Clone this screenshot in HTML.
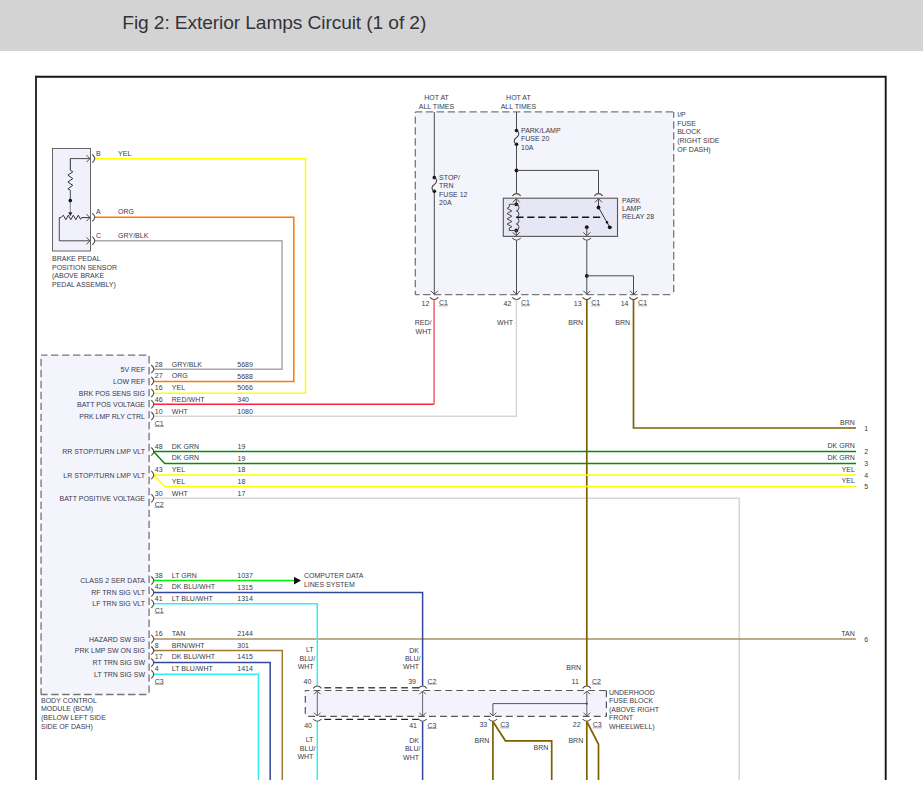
<!DOCTYPE html>
<html><head><meta charset="utf-8"><style>
html,body{margin:0;padding:0;background:#fff;width:923px;height:809px;overflow:hidden}
.hdr{position:absolute;left:0;top:0;width:923px;height:51px;background:#d3d3d3}
svg{position:absolute;left:0;top:0}
text{font-family:"Liberation Sans",sans-serif}
</style></head><body>
<div class="hdr"></div>
<svg width="923" height="809" viewBox="0 0 923 809">
<text x="122.3" y="28.9" font-size="19.2" fill="#33333a" textLength="304" lengthAdjust="spacing">Fig 2: Exterior Lamps Circuit (1 of 2)</text>
<polyline points="35.05,76.7 885.7,76.7 885.7,780" fill="none" stroke="#151515" stroke-width="1.9" stroke-linejoin="miter"/>
<polyline points="36,780 36,75.75" fill="none" stroke="#262626" stroke-width="1.9" stroke-linejoin="miter"/>
<polyline points="153.5,498.2 739.2,498.2 739.2,780" fill="none" stroke="#d6d6d6" stroke-width="1.5" stroke-linejoin="miter"/>
<polyline points="153.5,639.0 856,639.0" fill="none" stroke="#a89060" stroke-width="1.5" stroke-linejoin="miter"/>
<rect x="52.5" y="148.5" width="38" height="102.5" fill="#f1f1fb" stroke="#666" stroke-width="1"/>
<polyline points="94.6,158.7 305.5,158.7 305.5,393.2 153.6,393.2" fill="none" stroke="#ffff00" stroke-width="1.5" stroke-linejoin="miter"/>
<polyline points="94.6,217.2 293.8,217.2 293.8,381.4 153.6,381.4" fill="none" stroke="#ff7a00" stroke-width="1.5" stroke-linejoin="miter"/>
<polyline points="94.6,240.8 282,240.8 282,369.3 153.6,369.3" fill="none" stroke="#a8a8a8" stroke-width="1.5" stroke-linejoin="miter"/>
<path d="M92.3,154.5 Q95.19999999999999,157.29999999999998 94.6,158.6 Q95.19999999999999,159.9 92.3,162.7" fill="none" stroke="#505050" stroke-width="1.1"/>
<path d="M92.3,213.1 Q95.19999999999999,215.89999999999998 94.6,217.2 Q95.19999999999999,218.5 92.3,221.29999999999998" fill="none" stroke="#505050" stroke-width="1.1"/>
<path d="M92.3,236.70000000000002 Q95.19999999999999,239.5 94.6,240.8 Q95.19999999999999,242.10000000000002 92.3,244.9" fill="none" stroke="#505050" stroke-width="1.1"/>
<polyline points="70.3,158.6 90,158.6" fill="none" stroke="#4a4a4a" stroke-width="1" stroke-linejoin="miter"/>
<polyline points="86.5,155.1 90,158.6 86.5,162.1" fill="none" stroke="#4a4a4a" stroke-width="1"/>
<polyline points="70.3,200 70.3,190.2" fill="none" stroke="#4a4a4a" stroke-width="1" stroke-linejoin="miter"/>
<polyline points="70.3,158.6 70.3,170.2 72.8,171.8 67.9,175.2 72.8,178.6 67.9,182 72.8,185.4 67.9,188.8 70.3,190.2" fill="none" stroke="#333" stroke-width="1" stroke-linejoin="miter"/>
<line x1="70.3" y1="200" x2="70.3" y2="212.5" stroke="#888" stroke-width="1"/>
<circle cx="70.3" cy="200.6" r="1.8" fill="#111"/>
<polygon points="68.3,212.3 72.3,212.3 70.3,216.3" fill="#222"/>
<polyline points="59.3,217.6 61,217.6 63.3,215.2 65.8,219.7 68.3,215.2 70.8,219.7 73.3,215.2 75.8,219.7 78.3,215.2 80.6,219.3 81.6,217.6 90,217.6" fill="none" stroke="#333" stroke-width="1" stroke-linejoin="miter"/>
<polyline points="86.5,214.1 90,217.6 86.5,221.1" fill="none" stroke="#4a4a4a" stroke-width="1"/>
<polyline points="59.3,217.6 59.3,240.8 90,240.8" fill="none" stroke="#4a4a4a" stroke-width="1" stroke-linejoin="miter"/>
<polyline points="86.5,237.3 90,240.8 86.5,244.3" fill="none" stroke="#4a4a4a" stroke-width="1"/>
<text x="96" y="155.7" font-size="7" fill="#3a3a4a">B</text>
<text x="118.1" y="155.7" font-size="7" fill="#3a3a4a">YEL</text>
<text x="96" y="213.9" font-size="7" fill="#3a3a4a">A</text>
<text x="118.1" y="213.9" font-size="7" fill="#3a3a4a">ORG</text>
<text x="96" y="238.1" font-size="7" fill="#3a3a4a">C</text>
<text x="118.1" y="238.1" font-size="7" fill="#3a3a4a">GRY/BLK</text>
<text x="52" y="261.0" font-size="7" fill="#3a3a4a">BRAKE PEDAL</text>
<text x="52" y="269.55" font-size="7" fill="#3a3a4a">POSITION SENSOR</text>
<text x="52" y="278.1" font-size="7" fill="#3a3a4a">(ABOVE BRAKE</text>
<text x="52" y="286.65" font-size="7" fill="#3a3a4a">PEDAL ASSEMBLY)</text>
<rect x="415.3" y="111.9" width="258.4" height="182.8" fill="#f4f4fd"/>
<line x1="415.3" y1="111.9" x2="673.7" y2="111.9" stroke="#787878" stroke-width="1.3" stroke-dasharray="7.4,3.5" stroke-dashoffset="0.4"/>
<line x1="415.3" y1="111.9" x2="415.3" y2="294.7" stroke="#787878" stroke-width="1.3" stroke-dasharray="7.4,3.5" stroke-dashoffset="6.4"/>
<line x1="673.7" y1="111.9" x2="673.7" y2="294.7" stroke="#787878" stroke-width="1.3" stroke-dasharray="7.4,3.5" stroke-dashoffset="1.5"/>
<line x1="415.3" y1="294.7" x2="673.7" y2="294.7" stroke="#787878" stroke-width="1.3" stroke-dasharray="7.4,3.5" stroke-dashoffset="3.2"/>
<text x="436.5" y="100.1" text-anchor="middle" font-size="7" fill="#3a3a4a">HOT AT</text>
<text x="436.5" y="108.9" text-anchor="middle" font-size="7" fill="#3a3a4a">ALL TIMES</text>
<text x="518.4" y="100.1" text-anchor="middle" font-size="7" fill="#3a3a4a">HOT AT</text>
<text x="518.4" y="108.9" text-anchor="middle" font-size="7" fill="#3a3a4a">ALL TIMES</text>
<text x="677.2" y="116.9" font-size="7" fill="#3a3a4a">I/P</text>
<text x="677.2" y="125.6" font-size="7" fill="#3a3a4a">FUSE</text>
<text x="677.2" y="134.3" font-size="7" fill="#3a3a4a">BLOCK</text>
<text x="677.2" y="143.0" font-size="7" fill="#3a3a4a">(RIGHT SIDE</text>
<text x="677.2" y="151.7" font-size="7" fill="#3a3a4a">OF DASH)</text>
<line x1="434.3" y1="112" x2="434.3" y2="177.5" stroke="#4a4a4a" stroke-width="1"/>
<line x1="434.3" y1="191.4" x2="434.3" y2="294" stroke="#4a4a4a" stroke-width="1"/>
<circle cx="434.3" cy="177.6" r="1.8" fill="#111"/>
<circle cx="434.3" cy="191.3" r="1.8" fill="#111"/>
<path d="M434.3,177.6 C437.4,179 437.4,182.6 434.3,184.45 C431.2,186.3 431.2,189.9 434.3,191.3" fill="none" stroke="#444" stroke-width="1.1"/>
<text x="439.1" y="179.8" font-size="7" fill="#3a3a4a">STOP/</text>
<text x="439.1" y="188.15" font-size="7" fill="#3a3a4a">TRN</text>
<text x="439.1" y="196.5" font-size="7" fill="#3a3a4a">FUSE 12</text>
<text x="439.1" y="204.85" font-size="7" fill="#3a3a4a">20A</text>
<polyline points="430.8,290.8 434.3,294.3 437.8,290.8" fill="none" stroke="#4a4a4a" stroke-width="1"/>
<line x1="516.5" y1="112" x2="516.5" y2="130.5" stroke="#4a4a4a" stroke-width="1"/>
<line x1="516.5" y1="144.4" x2="516.5" y2="193.4" stroke="#4a4a4a" stroke-width="1"/>
<circle cx="516.5" cy="130.6" r="1.8" fill="#111"/>
<circle cx="516.5" cy="144.3" r="1.8" fill="#111"/>
<path d="M516.5,130.6 C519.6,132 519.6,135.6 516.5,137.45 C513.4,139.3 513.4,142.9 516.5,144.3" fill="none" stroke="#444" stroke-width="1.1"/>
<text x="521" y="133.0" font-size="7" fill="#3a3a4a">PARK/LAMP</text>
<text x="521" y="141.45" font-size="7" fill="#3a3a4a">FUSE 20</text>
<text x="521" y="149.9" font-size="7" fill="#3a3a4a">10A</text>
<circle cx="516.5" cy="170.4" r="1.9" fill="#111"/>
<polyline points="516.5,170.4 598.5,170.4 598.5,193.4" fill="none" stroke="#4a4a4a" stroke-width="1" stroke-linejoin="miter"/>
<path d="M512.3,195.9 Q516.5,191.29999999999998 520.7,195.9" fill="none" stroke="#4a4a4a" stroke-width="1.1"/>
<path d="M594.3,195.9 Q598.5,191.29999999999998 602.7,195.9" fill="none" stroke="#4a4a4a" stroke-width="1.1"/>
<rect x="503.3" y="198.2" width="114.2" height="38.2" fill="#e6e6f5" stroke="#555" stroke-width="1.1"/>
<text x="622" y="202.6" font-size="7" fill="#3a3a4a">PARK</text>
<text x="622" y="210.9" font-size="7" fill="#3a3a4a">LAMP</text>
<text x="622" y="219.2" font-size="7" fill="#3a3a4a">RELAY 28</text>
<polyline points="512.8,202.3 516.3,198.8 519.8,202.3" fill="none" stroke="#4a4a4a" stroke-width="1"/>
<line x1="516.3" y1="198.8" x2="516.3" y2="204.2" stroke="#4a4a4a" stroke-width="1"/>
<circle cx="516.3" cy="204.3" r="1.9" fill="#111"/>
<circle cx="516.3" cy="230.5" r="1.9" fill="#111"/>
<polyline points="516.3,204.3 509.3,204.3 509.3,207" fill="none" stroke="#4a4a4a" stroke-width="1" stroke-linejoin="miter"/>
<polyline points="509.3,207 507,208.3125 511.9,210.9375 507,213.5625 511.9,216.1875 507,218.8125 511.9,221.4375 507,224.0625 511.9,226.6875 509.3,228 509.3,230.5 516.3,230.5" fill="none" stroke="#4a4a4a" stroke-width="1" stroke-linejoin="miter"/>
<path d="M516.3,204.3 a3,3.3 0 0 1 0,6.55 a3,3.3 0 0 1 0,6.55 a3,3.3 0 0 1 0,6.55 a3,3.3 0 0 1 0,6.55" fill="none" stroke="#444" stroke-width="1"/>
<line x1="516.3" y1="217.3" x2="601" y2="217.3" stroke="#151515" stroke-width="1.4" stroke-dasharray="7.2,3.75" stroke-dashoffset="0.0"/>
<polyline points="512.8,232.3 516.3,235.8 519.8,232.3" fill="none" stroke="#4a4a4a" stroke-width="1"/>
<line x1="516.3" y1="230.5" x2="516.3" y2="235.8" stroke="#4a4a4a" stroke-width="1"/>
<polyline points="595.0,202.3 598.5,198.8 602.0,202.3" fill="none" stroke="#4a4a4a" stroke-width="1"/>
<line x1="598.5" y1="198.8" x2="598.5" y2="207.5" stroke="#4a4a4a" stroke-width="1"/>
<circle cx="598.5" cy="207.5" r="1.9" fill="#111"/>
<line x1="598.5" y1="207.5" x2="609.8" y2="227.3" stroke="#333" stroke-width="1"/>
<circle cx="607" cy="222.2" r="1.2" fill="#111"/>
<circle cx="609.8" cy="227.3" r="1.9" fill="#111"/>
<circle cx="586.8" cy="227.2" r="1.9" fill="#111"/>
<line x1="586.8" y1="227.2" x2="586.8" y2="235.8" stroke="#4a4a4a" stroke-width="1"/>
<polyline points="583.3,232.3 586.8,235.8 590.3,232.3" fill="none" stroke="#4a4a4a" stroke-width="1"/>
<path d="M512.3,238.0 Q516.5,242.60000000000002 520.7,238.0" fill="none" stroke="#4a4a4a" stroke-width="1.1"/>
<path d="M582.5999999999999,238.0 Q586.8,242.60000000000002 591.0,238.0" fill="none" stroke="#4a4a4a" stroke-width="1.1"/>
<line x1="516.5" y1="240.5" x2="516.5" y2="294.3" stroke="#4a4a4a" stroke-width="1"/>
<polyline points="513.0,290.8 516.5,294.3 520.0,290.8" fill="none" stroke="#4a4a4a" stroke-width="1"/>
<line x1="586.8" y1="240.5" x2="586.8" y2="294.3" stroke="#4a4a4a" stroke-width="1"/>
<polyline points="583.3,290.8 586.8,294.3 590.3,290.8" fill="none" stroke="#4a4a4a" stroke-width="1"/>
<circle cx="586.8" cy="275.8" r="1.9" fill="#111"/>
<polyline points="586.8,275.8 633.5,275.8 633.5,294.3" fill="none" stroke="#4a4a4a" stroke-width="1" stroke-linejoin="miter"/>
<polyline points="630.0,290.8 633.5,294.3 637.0,290.8" fill="none" stroke="#4a4a4a" stroke-width="1"/>
<path d="M430.0,297.3 Q434.2,301.90000000000003 438.4,297.3" fill="none" stroke="#4a4a4a" stroke-width="1.1"/>
<path d="M512.1999999999999,297.3 Q516.4,301.90000000000003 520.6,297.3" fill="none" stroke="#4a4a4a" stroke-width="1.1"/>
<path d="M582.5,297.3 Q586.7,301.90000000000003 590.9000000000001,297.3" fill="none" stroke="#4a4a4a" stroke-width="1.1"/>
<path d="M629.3,297.3 Q633.5,301.90000000000003 637.7,297.3" fill="none" stroke="#4a4a4a" stroke-width="1.1"/>
<polyline points="434.1,404.3 153.6,404.3" fill="none" stroke="#ff2040" stroke-width="1.5" stroke-linejoin="miter"/>
<polyline points="434.1,299.5 434.1,404.3" fill="none" stroke="#f5707c" stroke-width="1.7" stroke-linejoin="miter"/>
<polyline points="516.4,299.5 516.4,416.2 153.6,416.2" fill="none" stroke="#d6d6d6" stroke-width="1.5" stroke-linejoin="miter"/>
<polyline points="586.8,299.5 586.8,685.8" fill="none" stroke="#7f6000" stroke-width="1.7" stroke-linejoin="miter"/>
<polyline points="633.5,299.5 633.5,428 856,428" fill="none" stroke="#7f6000" stroke-width="1.7" stroke-linejoin="miter"/>
<text x="429.3" y="305.9" text-anchor="end" font-size="7" fill="#3a3a4a">12</text>
<text x="438.90000000000003" y="305.3" font-size="7" fill="#3a3a4a">C1</text>
<line x1="438.90000000000003" y1="305.8" x2="447.90000000000003" y2="305.8" stroke="#8a8a8a" stroke-width="0.75"/>
<text x="511.4" y="305.9" text-anchor="end" font-size="7" fill="#3a3a4a">42</text>
<text x="521.0" y="305.3" font-size="7" fill="#3a3a4a">C1</text>
<line x1="521.0" y1="305.8" x2="530.0" y2="305.8" stroke="#8a8a8a" stroke-width="0.75"/>
<text x="581.6" y="305.9" text-anchor="end" font-size="7" fill="#3a3a4a">13</text>
<text x="591.2" y="305.3" font-size="7" fill="#3a3a4a">C1</text>
<line x1="591.2" y1="305.8" x2="600.2" y2="305.8" stroke="#8a8a8a" stroke-width="0.75"/>
<text x="628.5" y="305.9" text-anchor="end" font-size="7" fill="#3a3a4a">14</text>
<text x="638.1" y="305.3" font-size="7" fill="#3a3a4a">C1</text>
<line x1="638.1" y1="305.8" x2="647.1" y2="305.8" stroke="#8a8a8a" stroke-width="0.75"/>
<text x="431.5" y="325.0" text-anchor="end" font-size="7" fill="#3a3a4a">RED/</text>
<text x="431.5" y="333.7" text-anchor="end" font-size="7" fill="#3a3a4a">WHT</text>
<text x="513" y="325" text-anchor="end" font-size="7" fill="#3a3a4a">WHT</text>
<text x="583" y="324.8" text-anchor="end" font-size="7" fill="#3a3a4a">BRN</text>
<text x="630" y="324.8" text-anchor="end" font-size="7" fill="#3a3a4a">BRN</text>
<rect x="41.05" y="355.2" width="108.05" height="339.3" fill="#f4f4fd"/>
<line x1="41.05" y1="355.2" x2="149.1" y2="355.2" stroke="#747474" stroke-width="1.3" stroke-dasharray="7.4,3.58" stroke-dashoffset="1.03"/>
<line x1="41.05" y1="355.2" x2="41.05" y2="694.5" stroke="#747474" stroke-width="1.3" stroke-dasharray="7.4,3.58" stroke-dashoffset="7.38"/>
<line x1="149.1" y1="355.2" x2="149.1" y2="694.5" stroke="#747474" stroke-width="1.3" stroke-dasharray="7.4,3.58" stroke-dashoffset="10.18"/>
<line x1="41.05" y1="694.5" x2="149.1" y2="694.5" stroke="#747474" stroke-width="1.3" stroke-dasharray="7.4,3.58" stroke-dashoffset="0.83"/>
<text x="41" y="702.5" font-size="7" fill="#3a3a4a">BODY CONTROL</text>
<text x="41" y="711.2" font-size="7" fill="#3a3a4a">MODULE (BCM)</text>
<text x="41" y="719.9" font-size="7" fill="#3a3a4a">(BELOW LEFT SIDE</text>
<text x="41" y="728.6" font-size="7" fill="#3a3a4a">SIDE OF DASH)</text>
<path d="M151.29999999999998,365.0 Q154.2,367.8 153.6,369.1 Q154.2,370.40000000000003 151.29999999999998,373.20000000000005" fill="none" stroke="#505050" stroke-width="1.1"/>
<text x="145" y="371.70000000000005" text-anchor="end" font-size="7" fill="#3a3a4a">5V REF</text>
<text x="154.8" y="366.7" font-size="7" fill="#3a3a4a">28</text>
<text x="171.8" y="366.7" font-size="7" fill="#3a3a4a">GRY/BLK</text>
<text x="237.3" y="366.7" font-size="7" fill="#3a3a4a">5689</text>
<path d="M151.29999999999998,377.0 Q154.2,379.8 153.6,381.1 Q154.2,382.40000000000003 151.29999999999998,385.20000000000005" fill="none" stroke="#505050" stroke-width="1.1"/>
<text x="145" y="383.70000000000005" text-anchor="end" font-size="7" fill="#3a3a4a">LOW REF</text>
<text x="154.8" y="377.8" font-size="7" fill="#3a3a4a">27</text>
<text x="171.8" y="377.8" font-size="7" fill="#3a3a4a">ORG</text>
<text x="237.3" y="378.6" font-size="7" fill="#3a3a4a">5688</text>
<path d="M151.29999999999998,388.79999999999995 Q154.2,391.59999999999997 153.6,392.9 Q154.2,394.2 151.29999999999998,397.0" fill="none" stroke="#505050" stroke-width="1.1"/>
<text x="145" y="395.5" text-anchor="end" font-size="7" fill="#3a3a4a">BRK POS SENS SIG</text>
<text x="154.8" y="389.7" font-size="7" fill="#3a3a4a">16</text>
<text x="171.8" y="389.7" font-size="7" fill="#3a3a4a">YEL</text>
<text x="237.3" y="390.0" font-size="7" fill="#3a3a4a">5066</text>
<path d="M151.29999999999998,400.2 Q154.2,403.0 153.6,404.3 Q154.2,405.6 151.29999999999998,408.40000000000003" fill="none" stroke="#505050" stroke-width="1.1"/>
<text x="145" y="406.90000000000003" text-anchor="end" font-size="7" fill="#3a3a4a">BATT POS VOLTAGE</text>
<text x="154.8" y="401.7" font-size="7" fill="#3a3a4a">46</text>
<text x="171.8" y="401.7" font-size="7" fill="#3a3a4a">RED/WHT</text>
<text x="237.3" y="401.7" font-size="7" fill="#3a3a4a">340</text>
<path d="M151.29999999999998,412.0 Q154.2,414.8 153.6,416.1 Q154.2,417.40000000000003 151.29999999999998,420.20000000000005" fill="none" stroke="#505050" stroke-width="1.1"/>
<text x="145" y="418.70000000000005" text-anchor="end" font-size="7" fill="#3a3a4a">PRK LMP RLY CTRL</text>
<text x="154.8" y="413.6" font-size="7" fill="#3a3a4a">10</text>
<text x="171.8" y="413.6" font-size="7" fill="#3a3a4a">WHT</text>
<text x="237.3" y="413.6" font-size="7" fill="#3a3a4a">1080</text>
<text x="154.8" y="426" font-size="7" fill="#3a3a4a">C1</text>
<line x1="154.8" y1="426.5" x2="163.8" y2="426.5" stroke="#8a8a8a" stroke-width="0.75"/>
<polyline points="153.5,451.6 856,451.6" fill="none" stroke="#0a8a0a" stroke-width="1.5" stroke-linejoin="miter"/>
<polyline points="153.5,451.6 164.7,463.4 856,463.4" fill="none" stroke="#0a8a0a" stroke-width="1.5" stroke-linejoin="miter"/>
<polyline points="153.5,475 856,475" fill="none" stroke="#ffff00" stroke-width="1.5" stroke-linejoin="miter"/>
<polyline points="153.5,475 164.7,486.6 856,486.6" fill="none" stroke="#ffff00" stroke-width="1.5" stroke-linejoin="miter"/>
<path d="M151.29999999999998,447.5 Q154.2,450.3 153.6,451.6 Q154.2,452.90000000000003 151.29999999999998,455.70000000000005" fill="none" stroke="#505050" stroke-width="1.1"/>
<path d="M151.29999999999998,470.9 Q154.2,473.7 153.6,475 Q154.2,476.3 151.29999999999998,479.1" fill="none" stroke="#505050" stroke-width="1.1"/>
<path d="M151.29999999999998,494.09999999999997 Q154.2,496.9 153.6,498.2 Q154.2,499.5 151.29999999999998,502.3" fill="none" stroke="#505050" stroke-width="1.1"/>
<text x="145" y="454.2" text-anchor="end" font-size="7" fill="#3a3a4a">RR STOP/TURN LMP VLT</text>
<text x="145" y="477.6" text-anchor="end" font-size="7" fill="#3a3a4a">LR STOP/TURN LMP VLT</text>
<text x="145" y="500.8" text-anchor="end" font-size="7" fill="#3a3a4a">BATT POSITIVE VOLTAGE</text>
<text x="154.8" y="448.7" font-size="7" fill="#3a3a4a">48</text>
<text x="171.8" y="448.7" font-size="7" fill="#3a3a4a">DK GRN</text>
<text x="237.5" y="448.7" font-size="7" fill="#3a3a4a">19</text>
<text x="171.8" y="459.6" font-size="7" fill="#3a3a4a">DK GRN</text>
<text x="237.5" y="460.6" font-size="7" fill="#3a3a4a">19</text>
<text x="154.8" y="471.8" font-size="7" fill="#3a3a4a">43</text>
<text x="171.8" y="471.8" font-size="7" fill="#3a3a4a">YEL</text>
<text x="237.5" y="471.8" font-size="7" fill="#3a3a4a">18</text>
<text x="171.8" y="483.7" font-size="7" fill="#3a3a4a">YEL</text>
<text x="237.5" y="483.7" font-size="7" fill="#3a3a4a">18</text>
<text x="154.8" y="495.8" font-size="7" fill="#3a3a4a">30</text>
<text x="171.8" y="495.8" font-size="7" fill="#3a3a4a">WHT</text>
<text x="237.5" y="495.8" font-size="7" fill="#3a3a4a">17</text>
<text x="154.8" y="507" font-size="7" fill="#3a3a4a">C2</text>
<line x1="154.8" y1="507.5" x2="163.8" y2="507.5" stroke="#8a8a8a" stroke-width="0.75"/>
<text x="854.8" y="424.8" text-anchor="end" font-size="7" fill="#3a3a4a">BRN</text>
<text x="864.3" y="430.8" font-size="7" fill="#3a3a4a">1</text>
<text x="854.8" y="448.40000000000003" text-anchor="end" font-size="7" fill="#3a3a4a">DK GRN</text>
<text x="864.3" y="454.40000000000003" font-size="7" fill="#3a3a4a">2</text>
<text x="854.8" y="460.2" text-anchor="end" font-size="7" fill="#3a3a4a">DK GRN</text>
<text x="864.3" y="466.2" font-size="7" fill="#3a3a4a">3</text>
<text x="854.8" y="471.8" text-anchor="end" font-size="7" fill="#3a3a4a">YEL</text>
<text x="864.3" y="477.8" font-size="7" fill="#3a3a4a">4</text>
<text x="854.8" y="483.40000000000003" text-anchor="end" font-size="7" fill="#3a3a4a">YEL</text>
<text x="864.3" y="489.40000000000003" font-size="7" fill="#3a3a4a">5</text>
<text x="854.8" y="635.8" text-anchor="end" font-size="7" fill="#3a3a4a">TAN</text>
<text x="864.3" y="641.8" font-size="7" fill="#3a3a4a">6</text>
<polyline points="153.5,580.6 294,580.6" fill="none" stroke="#00f000" stroke-width="1.5" stroke-linejoin="miter"/>
<polygon points="294,576.7 301,580.6 294,584.5" fill="#111"/>
<text x="303.9" y="577.9" font-size="7" fill="#3a3a4a">COMPUTER DATA</text>
<text x="303.9" y="586.7" font-size="7" fill="#3a3a4a">LINES SYSTEM</text>
<polyline points="153.6,592.6 422.6,592.6 422.6,685.8" fill="none" stroke="#33489a" stroke-width="1.5" stroke-linejoin="miter"/>
<polyline points="422.6,721.5 422.6,780" fill="none" stroke="#33489a" stroke-width="1.5" stroke-linejoin="miter"/>
<polyline points="153.6,603.8 317.3,603.8 317.3,685.8" fill="none" stroke="#30f0f0" stroke-width="1.5" stroke-linejoin="miter"/>
<polyline points="317.3,721.5 317.3,780" fill="none" stroke="#30f0f0" stroke-width="1.5" stroke-linejoin="miter"/>
<path d="M151.29999999999998,576.5 Q154.2,579.3000000000001 153.6,580.6 Q154.2,581.9 151.29999999999998,584.7" fill="none" stroke="#505050" stroke-width="1.1"/>
<text x="145" y="583.2" text-anchor="end" font-size="7" fill="#3a3a4a">CLASS 2 SER DATA</text>
<text x="154.8" y="577.8" font-size="7" fill="#3a3a4a">38</text>
<text x="171.8" y="577.8" font-size="7" fill="#3a3a4a">LT GRN</text>
<text x="237.3" y="577.8" font-size="7" fill="#3a3a4a">1037</text>
<path d="M151.29999999999998,588.5 Q154.2,591.3000000000001 153.6,592.6 Q154.2,593.9 151.29999999999998,596.7" fill="none" stroke="#505050" stroke-width="1.1"/>
<text x="145" y="595.2" text-anchor="end" font-size="7" fill="#3a3a4a">RF TRN SIG VLT</text>
<text x="154.8" y="589.0" font-size="7" fill="#3a3a4a">42</text>
<text x="171.8" y="589.0" font-size="7" fill="#3a3a4a">DK BLU/WHT</text>
<text x="237.3" y="589.8" font-size="7" fill="#3a3a4a">1315</text>
<path d="M151.29999999999998,599.6999999999999 Q154.2,602.5 153.6,603.8 Q154.2,605.0999999999999 151.29999999999998,607.9" fill="none" stroke="#505050" stroke-width="1.1"/>
<text x="145" y="606.4" text-anchor="end" font-size="7" fill="#3a3a4a">LF TRN SIG VLT</text>
<text x="154.8" y="600.9" font-size="7" fill="#3a3a4a">41</text>
<text x="171.8" y="600.9" font-size="7" fill="#3a3a4a">LT BLU/WHT</text>
<text x="237.3" y="600.9" font-size="7" fill="#3a3a4a">1314</text>
<text x="154.8" y="612.8" font-size="7" fill="#3a3a4a">C1</text>
<line x1="154.8" y1="613.3" x2="163.8" y2="613.3" stroke="#8a8a8a" stroke-width="0.75"/>
<polyline points="153.5,650.6 282.3,650.6 282.3,780" fill="none" stroke="#a07a32" stroke-width="1.5" stroke-linejoin="miter"/>
<polyline points="153.5,662.6 270.2,662.6 270.2,780" fill="none" stroke="#33489a" stroke-width="1.5" stroke-linejoin="miter"/>
<polyline points="153.5,674.3 258.4,674.3 258.4,780" fill="none" stroke="#30f0f0" stroke-width="1.5" stroke-linejoin="miter"/>
<path d="M151.29999999999998,634.9 Q154.2,637.7 153.6,639.0 Q154.2,640.3 151.29999999999998,643.1" fill="none" stroke="#505050" stroke-width="1.1"/>
<text x="145" y="641.6" text-anchor="end" font-size="7" fill="#3a3a4a">HAZARD SW SIG</text>
<text x="154.8" y="635.8" font-size="7" fill="#3a3a4a">16</text>
<text x="171.8" y="635.8" font-size="7" fill="#3a3a4a">TAN</text>
<text x="237.3" y="635.8" font-size="7" fill="#3a3a4a">2144</text>
<path d="M151.29999999999998,646.5 Q154.2,649.3000000000001 153.6,650.6 Q154.2,651.9 151.29999999999998,654.7" fill="none" stroke="#505050" stroke-width="1.1"/>
<text x="145" y="653.2" text-anchor="end" font-size="7" fill="#3a3a4a">PRK LMP SW ON SIG</text>
<text x="154.8" y="647.5" font-size="7" fill="#3a3a4a">8</text>
<text x="171.8" y="647.5" font-size="7" fill="#3a3a4a">BRN/WHT</text>
<text x="237.3" y="647.5" font-size="7" fill="#3a3a4a">301</text>
<path d="M151.29999999999998,658.5 Q154.2,661.3000000000001 153.6,662.6 Q154.2,663.9 151.29999999999998,666.7" fill="none" stroke="#505050" stroke-width="1.1"/>
<text x="145" y="665.2" text-anchor="end" font-size="7" fill="#3a3a4a">RT TRN SIG SW</text>
<text x="154.8" y="659.4" font-size="7" fill="#3a3a4a">17</text>
<text x="171.8" y="659.4" font-size="7" fill="#3a3a4a">DK BLU/WHT</text>
<text x="237.3" y="659.4" font-size="7" fill="#3a3a4a">1415</text>
<path d="M151.29999999999998,670.1999999999999 Q154.2,673.0 153.6,674.3 Q154.2,675.5999999999999 151.29999999999998,678.4" fill="none" stroke="#505050" stroke-width="1.1"/>
<text x="145" y="676.9" text-anchor="end" font-size="7" fill="#3a3a4a">LT TRN SIG SW</text>
<text x="154.8" y="670.7" font-size="7" fill="#3a3a4a">4</text>
<text x="171.8" y="670.7" font-size="7" fill="#3a3a4a">LT BLU/WHT</text>
<text x="237.3" y="670.7" font-size="7" fill="#3a3a4a">1414</text>
<text x="154.8" y="683.8" font-size="7" fill="#3a3a4a">C3</text>
<line x1="154.8" y1="684.3" x2="163.8" y2="684.3" stroke="#8a8a8a" stroke-width="0.75"/>
<rect x="305.3" y="690.5" width="301.1" height="25.8" fill="#f3f3fc"/>
<line x1="305.3" y1="690.5" x2="606.4" y2="690.5" stroke="#555" stroke-width="1.2" stroke-dasharray="6.8,4.18" stroke-dashoffset="2.68"/>
<line x1="305.3" y1="690.5" x2="305.3" y2="716.3" stroke="#555" stroke-width="1.2" stroke-dasharray="6.8,4.18" stroke-dashoffset="5.48"/>
<line x1="606.4" y1="690.5" x2="606.4" y2="716.3" stroke="#555" stroke-width="1.2" stroke-dasharray="6.8,4.18" stroke-dashoffset="0.0"/>
<line x1="305.3" y1="716.3" x2="606.4" y2="716.3" stroke="#555" stroke-width="1.2" stroke-dasharray="6.8,4.18" stroke-dashoffset="7.98"/>
<line x1="324.3" y1="687.8" x2="420.3" y2="687.8" stroke="#4a4a4a" stroke-width="1.4" stroke-dasharray="6.8,4.18" stroke-dashoffset="0.0"/>
<line x1="324.3" y1="719.4" x2="420.3" y2="719.4" stroke="#222" stroke-width="1.4" stroke-dasharray="6.8,4.18" stroke-dashoffset="0.0"/>
<line x1="317.3" y1="691" x2="317.3" y2="716" stroke="#666" stroke-width="1"/>
<polyline points="314.0,694.3 317.3,691 320.6,694.3" fill="none" stroke="#555" stroke-width="1"/>
<polyline points="314.0,712.7 317.3,716 320.6,712.7" fill="none" stroke="#555" stroke-width="1"/>
<path d="M313.1,688.3 Q317.3,683.7 321.5,688.3" fill="none" stroke="#4a4a4a" stroke-width="1.1"/>
<path d="M313.1,719.0 Q317.3,723.5999999999999 321.5,719.0" fill="none" stroke="#4a4a4a" stroke-width="1.1"/>
<line x1="422.6" y1="691" x2="422.6" y2="716" stroke="#666" stroke-width="1"/>
<polyline points="419.3,694.3 422.6,691 425.90000000000003,694.3" fill="none" stroke="#555" stroke-width="1"/>
<polyline points="419.3,712.7 422.6,716 425.90000000000003,712.7" fill="none" stroke="#555" stroke-width="1"/>
<path d="M418.40000000000003,688.3 Q422.6,683.7 426.8,688.3" fill="none" stroke="#4a4a4a" stroke-width="1.1"/>
<path d="M418.40000000000003,719.0 Q422.6,723.5999999999999 426.8,719.0" fill="none" stroke="#4a4a4a" stroke-width="1.1"/>
<line x1="586.8" y1="691" x2="586.8" y2="716" stroke="#666" stroke-width="1"/>
<polyline points="583.5,694.3 586.8,691 590.0999999999999,694.3" fill="none" stroke="#555" stroke-width="1"/>
<polyline points="583.5,712.7 586.8,716 590.0999999999999,712.7" fill="none" stroke="#555" stroke-width="1"/>
<path d="M582.5999999999999,688.3 Q586.8,683.7 591.0,688.3" fill="none" stroke="#4a4a4a" stroke-width="1.1"/>
<path d="M582.5999999999999,719.0 Q586.8,723.5999999999999 591.0,719.0" fill="none" stroke="#4a4a4a" stroke-width="1.1"/>
<polyline points="586.8,703.6 492.9,703.6 492.9,716" fill="none" stroke="#555" stroke-width="1" stroke-linejoin="miter"/>
<circle cx="586.8" cy="703.6" r="1.1" fill="#444"/>
<polyline points="489.59999999999997,712.7 492.9,716 496.2,712.7" fill="none" stroke="#555" stroke-width="1"/>
<path d="M488.7,719.0 Q492.9,723.5999999999999 497.09999999999997,719.0" fill="none" stroke="#4a4a4a" stroke-width="1.1"/>
<text x="608.9" y="694.5" font-size="7" fill="#3a3a4a">UNDERHOOD</text>
<text x="608.9" y="703.0" font-size="7" fill="#3a3a4a">FUSE BLOCK</text>
<text x="608.9" y="711.5" font-size="7" fill="#3a3a4a">(ABOVE RIGHT</text>
<text x="608.9" y="720.0" font-size="7" fill="#3a3a4a">FRONT</text>
<text x="608.9" y="728.5" font-size="7" fill="#3a3a4a">WHEELWELL)</text>
<polyline points="492.9,721.5 492.9,780" fill="none" stroke="#7f6000" stroke-width="1.7" stroke-linejoin="miter"/>
<polyline points="492.9,721.5 505.4,740.8 551.7,740.8 551.7,780" fill="none" stroke="#7f6000" stroke-width="1.7" stroke-linejoin="miter"/>
<polyline points="586.8,721.5 586.8,780" fill="none" stroke="#7f6000" stroke-width="1.7" stroke-linejoin="miter"/>
<polyline points="586.8,721.5 598.5,744.3 598.5,780" fill="none" stroke="#7f6000" stroke-width="1.7" stroke-linejoin="miter"/>
<text x="313.6" y="652" text-anchor="end" font-size="7" fill="#3a3a4a">LT</text>
<text x="315.1" y="661.2" text-anchor="end" font-size="7" fill="#3a3a4a">BLU/</text>
<text x="313.6" y="669.3" text-anchor="end" font-size="7" fill="#3a3a4a">WHT</text>
<text x="419" y="652.6" text-anchor="end" font-size="7" fill="#3a3a4a">DK</text>
<text x="420.5" y="661.4" text-anchor="end" font-size="7" fill="#3a3a4a">BLU/</text>
<text x="419" y="669.3" text-anchor="end" font-size="7" fill="#3a3a4a">WHT</text>
<text x="313.4" y="742" text-anchor="end" font-size="7" fill="#3a3a4a">LT</text>
<text x="315.4" y="750.6" text-anchor="end" font-size="7" fill="#3a3a4a">BLU/</text>
<text x="313.4" y="759.2" text-anchor="end" font-size="7" fill="#3a3a4a">WHT</text>
<text x="419" y="743" text-anchor="end" font-size="7" fill="#3a3a4a">DK</text>
<text x="420.5" y="751.3" text-anchor="end" font-size="7" fill="#3a3a4a">BLU/</text>
<text x="419" y="759.5" text-anchor="end" font-size="7" fill="#3a3a4a">WHT</text>
<text x="311.3" y="683.6" text-anchor="end" font-size="7" fill="#3a3a4a">40</text>
<text x="416" y="683.6" text-anchor="end" font-size="7" fill="#3a3a4a">39</text>
<text x="427.5" y="683.6" font-size="7" fill="#3a3a4a">C2</text>
<line x1="427.5" y1="684.1" x2="436.5" y2="684.1" stroke="#8a8a8a" stroke-width="0.75"/>
<text x="312" y="728" text-anchor="end" font-size="7" fill="#3a3a4a">40</text>
<text x="417" y="728" text-anchor="end" font-size="7" fill="#3a3a4a">41</text>
<text x="427.5" y="728" font-size="7" fill="#3a3a4a">C3</text>
<line x1="427.5" y1="728.5" x2="436.5" y2="728.5" stroke="#8a8a8a" stroke-width="0.75"/>
<text x="581" y="669.5" text-anchor="end" font-size="7" fill="#3a3a4a">BRN</text>
<text x="578.9" y="683.7" text-anchor="end" font-size="7" fill="#3a3a4a">11</text>
<text x="591.9" y="683.7" font-size="7" fill="#3a3a4a">C2</text>
<line x1="591.9" y1="684.2" x2="600.9" y2="684.2" stroke="#8a8a8a" stroke-width="0.75"/>
<text x="487.2" y="727.3" text-anchor="end" font-size="7" fill="#3a3a4a">33</text>
<text x="500.2" y="727.3" font-size="7" fill="#3a3a4a">C3</text>
<line x1="500.2" y1="727.8" x2="509.2" y2="727.8" stroke="#8a8a8a" stroke-width="0.75"/>
<text x="580.6" y="727.3" text-anchor="end" font-size="7" fill="#3a3a4a">22</text>
<text x="592.7" y="727.3" font-size="7" fill="#3a3a4a">C3</text>
<line x1="592.7" y1="727.8" x2="601.7" y2="727.8" stroke="#8a8a8a" stroke-width="0.75"/>
<text x="489.4" y="742.6" text-anchor="end" font-size="7" fill="#3a3a4a">BRN</text>
<text x="548.3" y="750.3" text-anchor="end" font-size="7" fill="#3a3a4a">BRN</text>
<text x="583.2" y="742.6" text-anchor="end" font-size="7" fill="#3a3a4a">BRN</text>
</svg>
</body></html>
